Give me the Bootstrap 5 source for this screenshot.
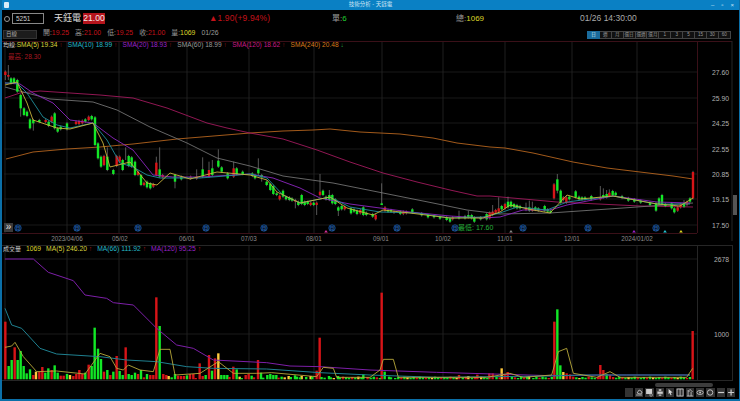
<!DOCTYPE html>
<html lang="zh-Hant">
<head>
<meta charset="utf-8">
<title>技術分析 - 天鈺電</title>
<link href="https://cdn.jsdelivr.net/npm/bootstrap@5.3.0/dist/css/bootstrap.min.css" rel="stylesheet">
<style>
html,body{margin:0;padding:0;background:#000;overflow:hidden}
body,.shell,.shell *{font-family:"Liberation Sans","Noto Sans CJK TC",sans-serif}
.shell{width:740px;height:401px;background:#000;border-left:2px solid #0b6fa8;border-right:1px solid #0b6fa8;border-bottom:2px solid #0b6fa8;color:#bbb;font-size:7px;line-height:1}
.titlebar{height:10px;background:#0a80c4;color:#cfe6f5;font-size:5.5px;position:relative}
.lockmark{width:5px;height:6px;background:#d8ecf8;border-radius:1px;margin-left:2px}
.winbtns{color:#cfe6f5;font-size:6px;gap:7px;margin-right:5px}
.quote{height:17px;padding-top:0}
.qcircle{width:6px;height:6px;border:1px solid #999;border-radius:50%;margin-left:2px}
.codebox{width:32px;height:11px;margin-left:2px;padding:0 3px;font-size:6.5px;line-height:9px;background:#000;color:#ccc;border:1px solid #888;border-radius:0;min-height:0}
.sname{margin-left:10px;width:28px;font-size:9px;color:#ddd;white-space:nowrap}
.pricebox{background:#b5141c;color:#f2e8e8;font-size:8.6px;padding:1px 0;margin-left:1px;width:22px;text-align:center}
.chg{position:absolute;left:207px;color:#c4121a;font-size:8.5px;letter-spacing:.12px}
.dan{position:absolute;left:330px;color:#999;font-size:8px}
.zong{position:absolute;left:454px;color:#999;font-size:8px}
.clock{position:absolute;left:578px;color:#aaa;font-size:8.5px}
.tgreen{color:#1fd032}.tyellow{color:#dcd52a}.tred{color:#c4121a}
.quote,.ohlc{position:relative}
.ohlc{height:14px;padding-left:1px;padding-top:3px;color:#999}
.selbox{width:34px;height:9px;padding:0 2px;font-size:5.5px;line-height:7px;background:#1c1c1c;color:#aaa;border:1px solid #333;border-radius:0;min-height:0;background-image:none}
.ohlc-items{gap:6px;margin-left:6px;font-size:6.9px}
.periods{position:absolute;left:586px;top:4px;height:8px}
.periods .btn{width:12.9px;height:8px;padding:0;font-size:4.6px;line-height:6px;background:#111;color:#999;border:1px solid #444;border-radius:0;margin-left:-1px}
.periods .btn.active{background:#1a6b9c;color:#cfe6f5;border-color:#1a6b9c}
.pane{position:relative;width:737px}
.pane svg{display:block}
.legend{position:absolute;left:1px;top:1px;gap:5.3px;font-size:6.6px;white-space:nowrap}
.lab{font-size:6px;color:#ccc}
.c5{color:#d8d23a}.c10{color:#25b8c8}.c20{color:#9a22c8}.c60{color:#9a9a9a}.c120{color:#c81a86}.c240{color:#d87a1a}.up{color:#a01818}.dn{color:#25a040}
.vlegend{top:1px;gap:5px;font-size:6.75px}
.hi-note{position:absolute;left:6px;top:13px;color:#a81820;font-size:6.5px}
.lo-note{position:absolute;left:456px;top:183px;color:#25b13a;font-size:7px}
.more{position:absolute;left:2px;top:182px;width:9px;height:9px;background:#3a3a3a;color:#ddd;font-size:10px;line-height:7px;text-align:center}
.bottomrow{height:16px;position:relative;width:737px}
.thumb{position:absolute;left:653px;top:2px;width:58px;height:4px;background:#3c3c3c;border-radius:2px}
.tools{position:absolute;right:4px;top:7px;gap:2px}
.tool{width:8.2px;height:9px;background:#333;display:block}
.sidegrip{position:absolute;left:731px;top:154px;width:4px;height:20px;background:#555}
text{font-family:"Liberation Sans","Noto Sans CJK TC",sans-serif}
</style>
</head>
<body>
<div class="shell d-flex flex-column">
  <div class="titlebar d-flex align-items-center justify-content-between">
    <span class="lockmark"></span>
    <span class="position-absolute top-50 start-50 translate-middle">技術分析 - 天鈺電</span>
    <span class="winbtns d-flex"><span>–</span><span>▫</span><span>×</span></span>
  </div>
  <div class="quote d-flex align-items-center">
    <span class="qcircle"></span>
    <input class="form-control codebox" value="5251" aria-label="代號">
    <span class="sname">天鈺電</span>
    <span class="pricebox">21.00</span>
    <span class="chg">▲1.90(+9.94%)</span>
    <span class="dan">單:<span class="tgreen">6</span></span>
    <span class="zong">總:<span class="tyellow">1069</span></span>
    <span class="clock">01/26 14:30:00</span>
  </div>
  <div class="ohlc d-flex align-items-start">
    <select class="form-select selbox" aria-label="週期"><option>日線</option></select>
    <div class="ohlc-items d-flex">
      <span>開:<span class="tred">19.25</span></span>
      <span>高:<span class="tred">21.00</span></span>
      <span>低:<span class="tred">19.25</span></span>
      <span>收:<span class="tred">21.00</span></span>
      <span>量:<span class="tyellow">1069</span></span>
      <span>01/26</span>
    </div>
    <div class="periods btn-group" role="group">
      <button class="btn active">日</button><button class="btn">週</button><button class="btn">月</button><button class="btn">還日</button><button class="btn">還週</button><button class="btn">還月</button><button class="btn">1</button><button class="btn">3</button><button class="btn">5</button><button class="btn">15</button><button class="btn">30</button><button class="btn">60</button>
    </div>
  </div>
  <div class="pane" style="height:204px">
    <svg id="price" width="737" height="204" viewBox="2 41 737 204"></svg>
    <div class="legend d-flex">
      <span><span class="lab">均線:</span><span class="c5">SMA(5) 19.34 <span class="up">↑</span></span></span>
      <span class="c10">SMA(10) 18.99 <span class="up">↑</span></span>
      <span class="c20">SMA(20) 18.93 <span class="up">↑</span></span>
      <span class="c60">SMA(60) 18.99 <span class="up">↑</span></span>
      <span class="c120">SMA(120) 18.62 <span class="up">↑</span></span>
      <span class="c240">SMA(240) 20.48 <span class="dn">↓</span></span>
    </div>
    <span class="hi-note">最高: 28.30</span>
    <span class="lo-note">最低: 17.60</span>
    <span class="more">»</span>
    <span class="sidegrip"></span>
  </div>
  <div class="pane" style="height:136px">
    <svg id="vol" width="737" height="136" viewBox="2 245 737 136"></svg>
    <div class="legend vlegend d-flex">
      <span class="lab">成交量</span>
      <span class="tyellow">1069</span>
      <span class="c5">MA(5) 246.20 <span class="up">↑</span></span>
      <span class="c10">MA(66) 111.92 <span class="up">↑</span></span>
      <span class="c20">MA(120) 95.25 <span class="up">↑</span></span>
    </div>
  </div>
  <div class="bottomrow">
    <span class="thumb"></span>
    <div class="tools d-flex" id="tools"></div>
  </div>
</div>
<script src="https://cdn.jsdelivr.net/npm/bootstrap@5.3.0/dist/js/bootstrap.bundle.min.js"></script>
<script>
var G='#12e826',R='#d81418',Y='#ffc83c',W='#7c7c7c';
function reg(xo,yo,list){return list.map(function(c){return {x:xo+c[0]/3,t:yo+c[1]/3,b:yo+c[2]/3,c:c[3]==='R'?R:G,wt:c[4]?yo+c[4]/3:null,wb:c[5]?yo+c[5]/3:null}})}
var candles=[].concat(
reg(0,60,[[16,35,45,'R',0,60],[25,45,50,'R',15,60],[33,55,70,'G'],[42,55,68,'G'],[52,60,95,'G'],[62,105,145,'G',0,170],[72,145,165,'G'],[81,155,168,'G'],[90,178,205,'G'],[100,180,190,'G',0,212],[118,180,186,'G'],[137,180,186,'R'],[146,185,198,'G'],[155,170,185,'R'],[164,160,205,'G'],[173,205,215,'G'],[182,200,208,'G'],[201,190,208,'G'],[228,185,192,'R'],[237,183,192,'R'],[247,182,190,'R'],[256,178,185,'G'],[266,170,180,'R'],[275,168,178,'G'],[285,172,255,'G'],[294,250,295,'G'],[303,290,320,'G'],[312,288,315,'R'],[322,290,330,'G',262,0],[340,330,342,'G'],[350,288,318,'R'],[359,290,305,'R'],[368,300,330,'G'],[377,0,0,'G',262,300],[386,288,318,'G'],[395,292,320,'G'],[405,305,345,'G'],[414,335,345,'R'],[423,345,375,'G'],[432,368,375,'R'],[441,365,382,'G'],[451,370,385,'G'],[460,372,380,'R'],[469,308,345,'R',290,0],[479,328,350,'G',262,0],[488,345,352,'R'],[525,345,365,'G',0,385],[544,350,358,'G'],[572,350,356,'R'],[590,350,356,'R',328,0],[608,328,350,'G',292,0],[627,330,350,'R',305,0],[637,325,345,'G',300,0],[655,302,320,'G',268,0],[665,322,335,'G'],[683,340,355,'G'],[701,325,350,'R',305,0],[710,325,342,'G'],[728,335,342,'G']]),
reg(250,100,[[7,220,228,'G'],[15,225,235,'G'],[25,208,220,'G',175,225],[35,225,232,'G',0,245],[50,245,255,'G'],[61,252,270,'G'],[70,258,282,'G'],[80,280,285,'G'],[89,287,298,'R'],[99,272,290,'G'],[108,290,298,'G'],[118,292,300,'G'],[126,295,302,'G'],[136,300,305,'R',0,325],[145,305,315,'G'],[155,285,312,'G'],[164,305,315,'G'],[173,305,312,'G'],[182,308,315,'R'],[191,308,315,'G'],[200,308,315,'R',0,345],[210,275,285,'R',222,290],[219,272,285,'G',0,0],[228,290,298,'G'],[238,285,300,'G',270,0],[247,285,310,'G'],[256,298,312,'G'],[265,322,332,'G',0,348],[275,318,328,'G'],[284,320,328,'R'],[303,325,340,'G'],[312,328,335,'G'],[321,332,342,'G'],[331,330,340,'R'],[340,322,345,'G'],[349,338,345,'G'],[368,342,350,'G'],[377,345,358,'R'],[395,310,315,'G',250,315],[405,322,332,'R'],[414,330,335,'G'],[423,330,335,'G'],[432,335,338,'R'],[451,335,342,'G'],[460,335,342,'R'],[469,335,340,'R'],[487,328,338,'G'],[515,340,346,'G'],[534,345,352,'G'],[552,348,352,'G'],[570,350,356,'G'],[590,352,360,'G'],[600,355,365,'G'],[608,352,358,'R'],[627,350,355,'G',332,0],[645,348,355,'G'],[655,345,352,'G',332,0],[665,345,355,'G'],[673,352,365,'G'],[692,352,358,'G'],[710,342,358,'G'],[719,338,355,'R'],[728,335,342,'R',315,0]]),
reg(490,120,[[8,278,285,'R'],[17,270,278,'R'],[26,265,275,'R',232,0],[35,258,268,'G'],[45,252,265,'R'],[54,245,262,'G',230,0],[63,245,260,'G'],[72,252,262,'G'],[81,255,265,'G'],[90,258,265,'G'],[108,262,270,'R',248,0],[118,262,272,'G',242,0],[127,265,272,'R',245,0],[136,262,270,'G'],[145,265,272,'G'],[164,258,272,'G'],[173,268,275,'G'],[182,272,278,'G'],[192,193,235,'R'],[202,178,212,'G',162,220],[212,212,248,'G'],[220,232,240,'R'],[229,232,248,'R'],[238,230,238,'G'],[257,214,232,'G'],[267,230,238,'G'],[276,232,238,'G'],[285,232,238,'G'],[304,228,238,'G'],[331,232,238,'R',198,0],[340,225,232,'G',205,0],[350,222,232,'G',210,0],[358,218,228,'R',208,0],[368,213,225,'G'],[377,218,226,'G'],[396,228,234,'G'],[415,234,242,'G'],[433,238,245,'G'],[452,242,248,'G'],[480,248,255,'G'],[498,250,272,'G'],[507,235,252,'G'],[516,225,252,'G'],[526,252,258,'G'],[545,250,265,'G'],[553,265,277,'G'],[563,262,272,'R'],[572,252,262,'R'],[582,250,260,'G',240,0],[591,245,255,'R'],[600,235,245,'G'],[609,156,235,'R']])
);
var p240=[[6,159],[33,152],[67,149],[100,147],[133,144],[177,139],[250,133],[283,131],[313,130],[330,129],[360,132],[400,134],[433,138],[457,143],[490,147],[505,148],[533,153],[573,162],[607,168],[640,172],[673,176],[693,179]];
var p120=[[5,98],[20,93],[40,91],[100,95],[133,98],[167,108],[207,123],[227,128],[250,133],[283,139],[317,150],[350,162],[383,173],[417,182],[450,190],[477,196],[490,196],[557,202],[640,206],[693,207]];
var p60=[[5,87],[27,93],[50,99],[93,102],[117,110],[150,127],[187,143],[217,158],[250,166],[283,176],[333,183],[383,193],[433,203],[467,210],[500,214],[550,213],[623,208],[693,203]];
var p20=[[5,83],[20,84],[33,93],[53,103],[70,120],[93,123],[113,138],[133,150],[153,175],[173,177],[200,177],[250,174],[273,178],[300,188],[320,198],[350,204],[380,208],[410,212],[450,216],[483,218],[500,217],[523,210],[550,210],[567,205],[613,196],[657,202],[690,203]];
var p10=[[5,83],[17,83],[27,93],[43,117],[57,125],[70,128],[93,123],[107,140],[120,163],[133,167],[147,175],[160,178],[200,178],[250,174],[267,178],[283,195],[300,203],[330,197],[350,207],[380,212],[417,213],[450,218],[483,217],[500,213],[517,207],[547,210],[567,202],[613,196],[657,204],[690,204]];
var p5=[[5,85],[17,82],[27,103],[33,120],[57,128],[70,129],[93,123],[103,143],[110,167],[130,162],[147,183],[157,185],[170,173],[190,179],[217,172],[250,175],[267,180],[277,192],[300,203],[330,197],[347,208],[373,215],[383,210],[410,213],[450,218],[483,218],[500,212],[510,205],[533,210],[550,213],[567,195],[580,199],[613,196],[657,204],[680,206],[693,198]];
function pts(a){return a.map(function(p){return p[0]+','+p[1]}).join(' ')}
function line(a,c,w){return '<polyline fill="none" stroke="'+c+'" stroke-width="'+(w||0.9)+'" stroke-linejoin="round" points="'+pts(a)+'"/>'}
var gv=[5,67,119,187,249,314,382,443,505,572,637];
var s='';
[72,98,123,149,174,199,225].forEach(function(y){s+='<line x1="4" x2="697" y1="'+y+'" y2="'+y+'" stroke="#1f1f1f" stroke-width=".8"/>'});
gv.forEach(function(x){s+='<line x1="'+x+'" x2="'+x+'" y1="41" y2="233" stroke="#262626" stroke-width=".8"/>'});
s+='<line x1="2" x2="732" y1="41.5" y2="41.5" stroke="#3a1018"/><line x1="2" x2="697" y1="233.5" y2="233.5" stroke="#3a1018"/><line x1="697.5" x2="697.5" y1="41" y2="233" stroke="#3a1018"/><line x1="732" x2="732" y1="41" y2="241" stroke="#262626"/>';
var xl=[[67,'2023/04/06'],[120,'05/02'],[187,'06/01'],[249,'07/03'],[314,'08/01'],[381,'09/01'],[443,'10/02'],[505,'11/01'],[572,'12/01'],[637,'2024/01/02']];
xl.forEach(function(l){s+='<text x="'+l[0]+'" y="241" fill="#8a8a8a" font-size="6.3" text-anchor="middle">'+l[1]+'</text>'});
[['27.60',72],['25.90',98],['24.25',123],['22.55',149],['20.85',174],['19.15',199],['17.50',225]].forEach(function(l){s+='<text x="712" y="'+(l[1]+2.5)+'" fill="#b0b0b0" font-size="6.8">'+l[0]+'</text>'});
[18,77,138,206,264,332,397,455,523,588,656].forEach(function(x){s+='<circle cx="'+x+'" cy="228" r="3.2" fill="#021428" stroke="#1a5aa8" stroke-width=".8"/><text x="'+x+'" y="230" fill="#4a8ee0" font-size="4.8" text-anchor="middle">月</text>'});
[[326,'#d8309a'],[511,'#888888'],[634,'#a020d0'],[665,'#25c8d8'],[681,'#e0d820']].forEach(function(t){s+='<polygon points="'+(t[0]-1.8)+',232.5 '+(t[0]+1.8)+',232.5 '+t[0]+',230" fill="'+t[1]+'"/>'});
s+=line(p240,'#b4641e')+line(p120,'#a01a5c')+line(p60,'#707070');
candles.forEach(function(c){
  var wt=c.wt||(c.t-1.2),wb=c.wb||(c.b+1.2);
  if(c.b>c.t||c.wt){s+='<line x1="'+c.x+'" x2="'+c.x+'" y1="'+wt+'" y2="'+wb+'" stroke="'+W+'" stroke-width=".7"/>'}
  if(c.b>c.t){s+='<rect x="'+(c.x-1.2)+'" y="'+c.t+'" width="2.4" height="'+(c.b-c.t)+'" fill="'+c.c+'"/>'}
});
s+=line(p20,'#8c26c0')+line(p10,'#1f8f9c')+line(p5,'#c8b43c');
document.getElementById('price').innerHTML=s;

var big={16:[245,R],26:[378,G],35:[360,G],44:[322,R],53:[360,G],62:[333,G],71:[378,G],80:[400,G],90:[388,G],100:[405,R],108:[395,Y],118:[395,R],127:[381,R],136:[398,G],145:[385,G],155:[390,R],164:[376,G],173:[398,G],182:[407,R],191:[407,R],201:[402,G],210:[405,Y],220:[408,R],229:[402,R],238:[390,R],247:[402,R],256:[398,G],266:[374,R],275:[378,G],284:[263,G],294:[326,G],303:[357,G],312:[395,R],322:[390,G],331:[405,R],340:[395,G],350:[348,R],359:[393,G],368:[405,G],377:[322,R],386:[402,G],395:[405,G],405:[398,G],414:[402,R],423:[390,G],432:[412,R],441:[402,G],451:[405,R],460:[405,R],469:[172,R],479:[258,G],490:[402,R],499:[405,R],506:[408,Y],515:[412,G],525:[402,G],534:[407,R],543:[408,R],552:[408,R],561:[406,G],570:[402,R],580:[402,R],599:[370,R],608:[408,R],617:[405,G],627:[345,R],636:[392,G],645:[355,R],655:[340,Y],664:[405,G],673:[405,G],682:[405,G],700:[380,R],710:[388,G],719:[410,Y],737:[405,R],746:[402,R],755:[407,G],774:[360,R],783:[398,G],802:[405,G],811:[402,G],820:[405,G],829:[405,G],866:[408,Y],885:[406,G],905:[408,Y],932:[408,Y],950:[392,R],959:[293,R],987:[408,G],1014:[408,G],1090:[403,G]};
var big2={35:[158,R],44:[395,G],63:[412,G],267:[405,R],295:[408,Y],322:[404,R],358:[400,R],368:[400,R],395:[385,Y],404:[405,R],413:[396,R],477:[408,Y],553:[245,R],562:[208,G],571:[376,G],580:[396,Y],590:[400,R],600:[403,R],691:[375,R],700:[390,R],710:[402,G],720:[405,R],968:[273,R]};
var v='';
[259,334].forEach(function(y){v+='<line x1="4" x2="697" y1="'+y+'" y2="'+y+'" stroke="#222" stroke-width=".8"/>'});
gv.forEach(function(x){v+='<line x1="'+x+'" x2="'+x+'" y1="245" y2="381" stroke="#262626" stroke-width=".8"/>'});
v+='<line x1="2" x2="732" y1="245.5" y2="245.5" stroke="#262626"/><line x1="2" x2="732" y1="380.5" y2="380.5" stroke="#262626"/><line x1="697.5" x2="697.5" y1="245" y2="380" stroke="#262626"/><line x1="732.5" x2="732.5" y1="245" y2="381" stroke="#262626"/>';
v+='<text x="714" y="261.5" fill="#b0b0b0" font-size="6.8">2678</text><text x="714" y="336.5" fill="#b0b0b0" font-size="6.8">1000</text>';
function barAt(x,top,c){var y=240+top/3;v+='<rect x="'+(x-1.2)+'" y="'+y+'" width="2.4" height="'+(379.3-y)+'" fill="'+c+'"/>'}
var used={};
Object.keys(big).forEach(function(k){var x=k/3;used[Math.round((x-5.33)/3.07)]=1;barAt(x,big[k][0],big[k][1])});
Object.keys(big2).forEach(function(k){var x=370+k/3;used[Math.round((x-5.33)/3.07)]=1;barAt(x,big2[k][0],big2[k][1])});
var cyc=[G,R,G,Y,G,G,R,G];
for(var i=0;i<224;i++){if(!used[i]&&i>60){var x=5.33+i*3.07;barAt(x,(i*7)%5+410,cyc[i%8])}}
function z6(a){return a.map(function(p){return [p[0]/3,240+p[1]/3]})}
function z7(a){return a.map(function(p){return [370+p[0]/3,240+p[1]/3]})}
var vY=z6([[15,322],[35,318],[45,307],[70,350],[110,395],[170,393],[255,402],[300,340],[330,350],[350,385],[370,390],[385,375],[420,390],[460,395],[480,328],[510,328],[525,405],[600,400],[655,365],[700,400],[770,400],[815,398],[950,410],[970,382],[1000,385],[1010,412],[1110,412]]).concat(z7([[30,390],[40,358],[70,358],[85,412],[350,412],[420,400],[460,412],[545,405],[565,335],[590,325],[610,400],[680,412],[720,395],[750,412],[950,412],[968,385]]));
var vC=z6([[15,205],[35,255],[65,265],[120,325],[170,342],[300,350],[380,360],[470,365],[560,380],[640,385],[800,387],[960,398],[1110,405]]).concat(z7([[200,412],[540,408],[640,405],[770,405],[960,405]]));
var vP=z6([[15,57],[100,57],[145,97],[220,122],[255,165],[320,175],[340,188],[400,195],[470,265],[530,315],[580,325],[640,360],[800,368],[870,378],[960,380],[1110,390]]).concat(z7([[200,397],[540,407],[700,405],[960,405]]));
v+=line(vP,'#7d1fa8',1)+line(vC,'#1f8090',1)+line(vY,'#b8a83a',.9);
document.getElementById('vol').innerHTML=v;

var ic=[
'',
'<path d="M1 7h6M2 5l2-3 2 1 1 2-2 1z" fill="none" stroke="#ccc" stroke-width=".8"/>',
'<path d="M1 1h6v5H1z" fill="#ccc"/><circle cx="6" cy="7" r="1.3" fill="#333" stroke="#ccc" stroke-width=".6"/>',
'<path d="M2.5 3V1h3v2M1 3.2h6v3H1zM2.5 6v2h3V6" fill="#ccc" stroke="#333" stroke-width=".5"/>',
'<path d="M2.5 1l4 3.5-2 .2 1 2.3-1 .3-1-2.2-1 1.2z" fill="#ddd"/>',
'<path d="M1 1h6v7H1zM4 1v7" fill="none" stroke="#ccc" stroke-width=".8"/>',
'<path d="M1 8h6M2 8V2M2 3h2M5 8V4M3.5 1l3 3" fill="none" stroke="#ccc" stroke-width=".8"/>',
'<ellipse cx="4" cy="4.5" rx="3.2" ry="2" fill="none" stroke="#ccc" stroke-width=".8"/><circle cx="4" cy="4.5" r=".9" fill="#ccc"/>',
'<circle cx="4" cy="4.5" r="2.7" fill="none" stroke="#ccc" stroke-width=".9"/>',
'<path d="M1 4.5h6" stroke="#ccc" stroke-width="1.2"/>',
'<path d="M1 4.5h6M4 1.5v6" stroke="#ccc" stroke-width="1.2"/>'
];
document.getElementById('tools').innerHTML=ic.map(function(d){return '<svg class="tool" viewBox="0 0 8 9">'+d+'</svg>'}).join('');
</script>
</body>
</html>
